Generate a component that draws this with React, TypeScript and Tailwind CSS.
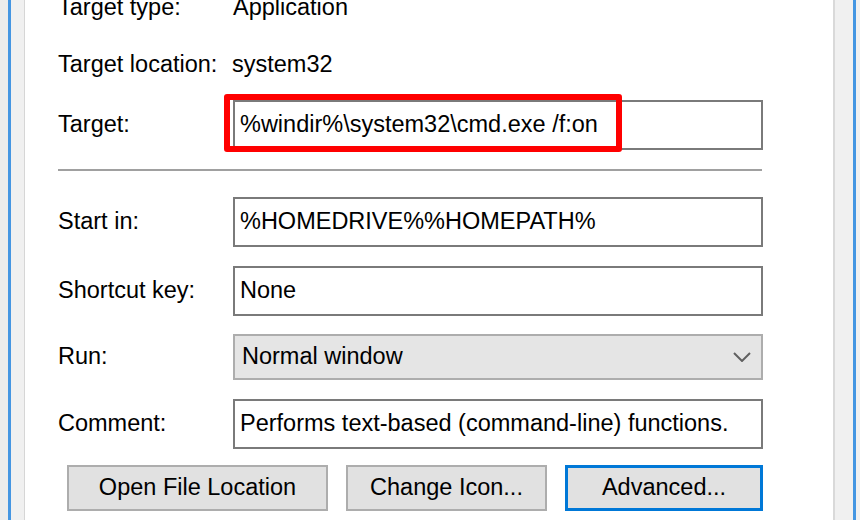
import { ReactNode } from 'react';

const font = { fontFamily: '"Liberation Sans", Arial, sans-serif' };

const Field = ({ label, children }: { label: string; children: ReactNode }) => (
  <div className="flex items-center">
    <div className="w-[175px] shrink-0 text-[23.5px] text-black">{label}</div>
    {children}
  </div>
);

const TextBox = ({ value, className = '' }: { value: string; className?: string }) => (
  <div
    className={
      'relative flex h-[50px] w-[530px] items-center border-2 border-[#7a7a7a] bg-white pl-[5px] text-[23.5px] text-black ' +
      className
    }
  >
    {value}
  </div>
);

const Button = ({ label, width, focused }: { label: string; width: string; focused?: boolean }) => (
  <button
    className={
      'flex h-[46px] items-center justify-center bg-[#e1e1e1] text-[23.5px] text-black ' +
      width +
      (focused ? ' border-[3px] border-[#0078d7]' : ' border-2 border-[#adadad]')
    }
  >
    {label}
  </button>
);

export default function App() {
  return (
    <div className="flex h-[520px] w-[860px] overflow-hidden bg-[#f0f0f0]" style={font}>
      {/* left window frame */}
      <div className="w-[8px] bg-[#ececec]" />
      <div className="w-[3px] bg-[#4596e2]" />
      <div className="w-[14px] border-r border-[#d6d6d6] bg-[#f0f0f0]" />

      {/* tab page */}
      <div className="flex w-[808px] flex-col bg-white pl-[33px]">
        <div className="-mt-[7px] flex h-[30px] items-center">
          <div className="w-[175px] text-[23.5px] text-black">Target type:</div>
          <div className="text-[23.5px] text-black">Application</div>
        </div>
        <div className="mt-[27px] flex h-[30px] items-center">
          <div className="w-[175px] text-[23.5px] text-black">Target location:</div>
          <div className="-ml-[1px] text-[23.5px] text-black">system32</div>
        </div>

        <div className="mt-[20px]">
          <Field label="Target:">
            <div className="relative">
              <TextBox value="%windir%\system32\cmd.exe /f:on" />
              {/* red highlight */}
              <div className="absolute -left-[9px] -top-[6px] h-[58px] w-[398px] rounded-[3px] border-[6px] border-[#ff0000]" />
            </div>
          </Field>
        </div>

        <div className="mt-[19px] h-[2px] w-[704px] bg-[#a0a0a0]" />

        <div className="mt-[26px]">
          <Field label="Start in:">
            <TextBox value="%HOMEDRIVE%%HOMEPATH%" />
          </Field>
        </div>
        <div className="mt-[19px]">
          <Field label="Shortcut key:">
            <TextBox value="None" />
          </Field>
        </div>
        <div className="mt-[18px]">
          <Field label="Run:">
            <div className="flex h-[46px] w-[530px] items-center justify-between border-2 border-[#adadad] bg-[#e5e5e5] pl-[7px] pr-[10px] text-[23.5px] text-black">
              <span>Normal window</span>
              <svg width="18" height="10" viewBox="0 0 18 10">
                <polyline points="1,1 9,9 17,1" fill="none" stroke="#606060" strokeWidth="2" />
              </svg>
            </div>
          </Field>
        </div>
        <div className="mt-[19px]">
          <Field label="Comment:">
            <TextBox value="Performs text-based (command-line) functions." />
          </Field>
        </div>

        <div className="ml-[9px] mt-[16px] flex gap-[18px]">
          <Button label="Open File Location" width="w-[261px]" />
          <Button label="Change Icon..." width="w-[201px]" />
          <Button label="Advanced..." width="w-[198px]" focused />
        </div>
      </div>

      {/* right window frame */}
      <div className="w-[20px] border-l-2 border-[#d9d9d9] bg-[#f0f0f0]" />
      <div className="w-[3px] bg-[#4596e2]" />
      <div className="flex-1 bg-[#f0f0f0]" />
    </div>
  );
}
